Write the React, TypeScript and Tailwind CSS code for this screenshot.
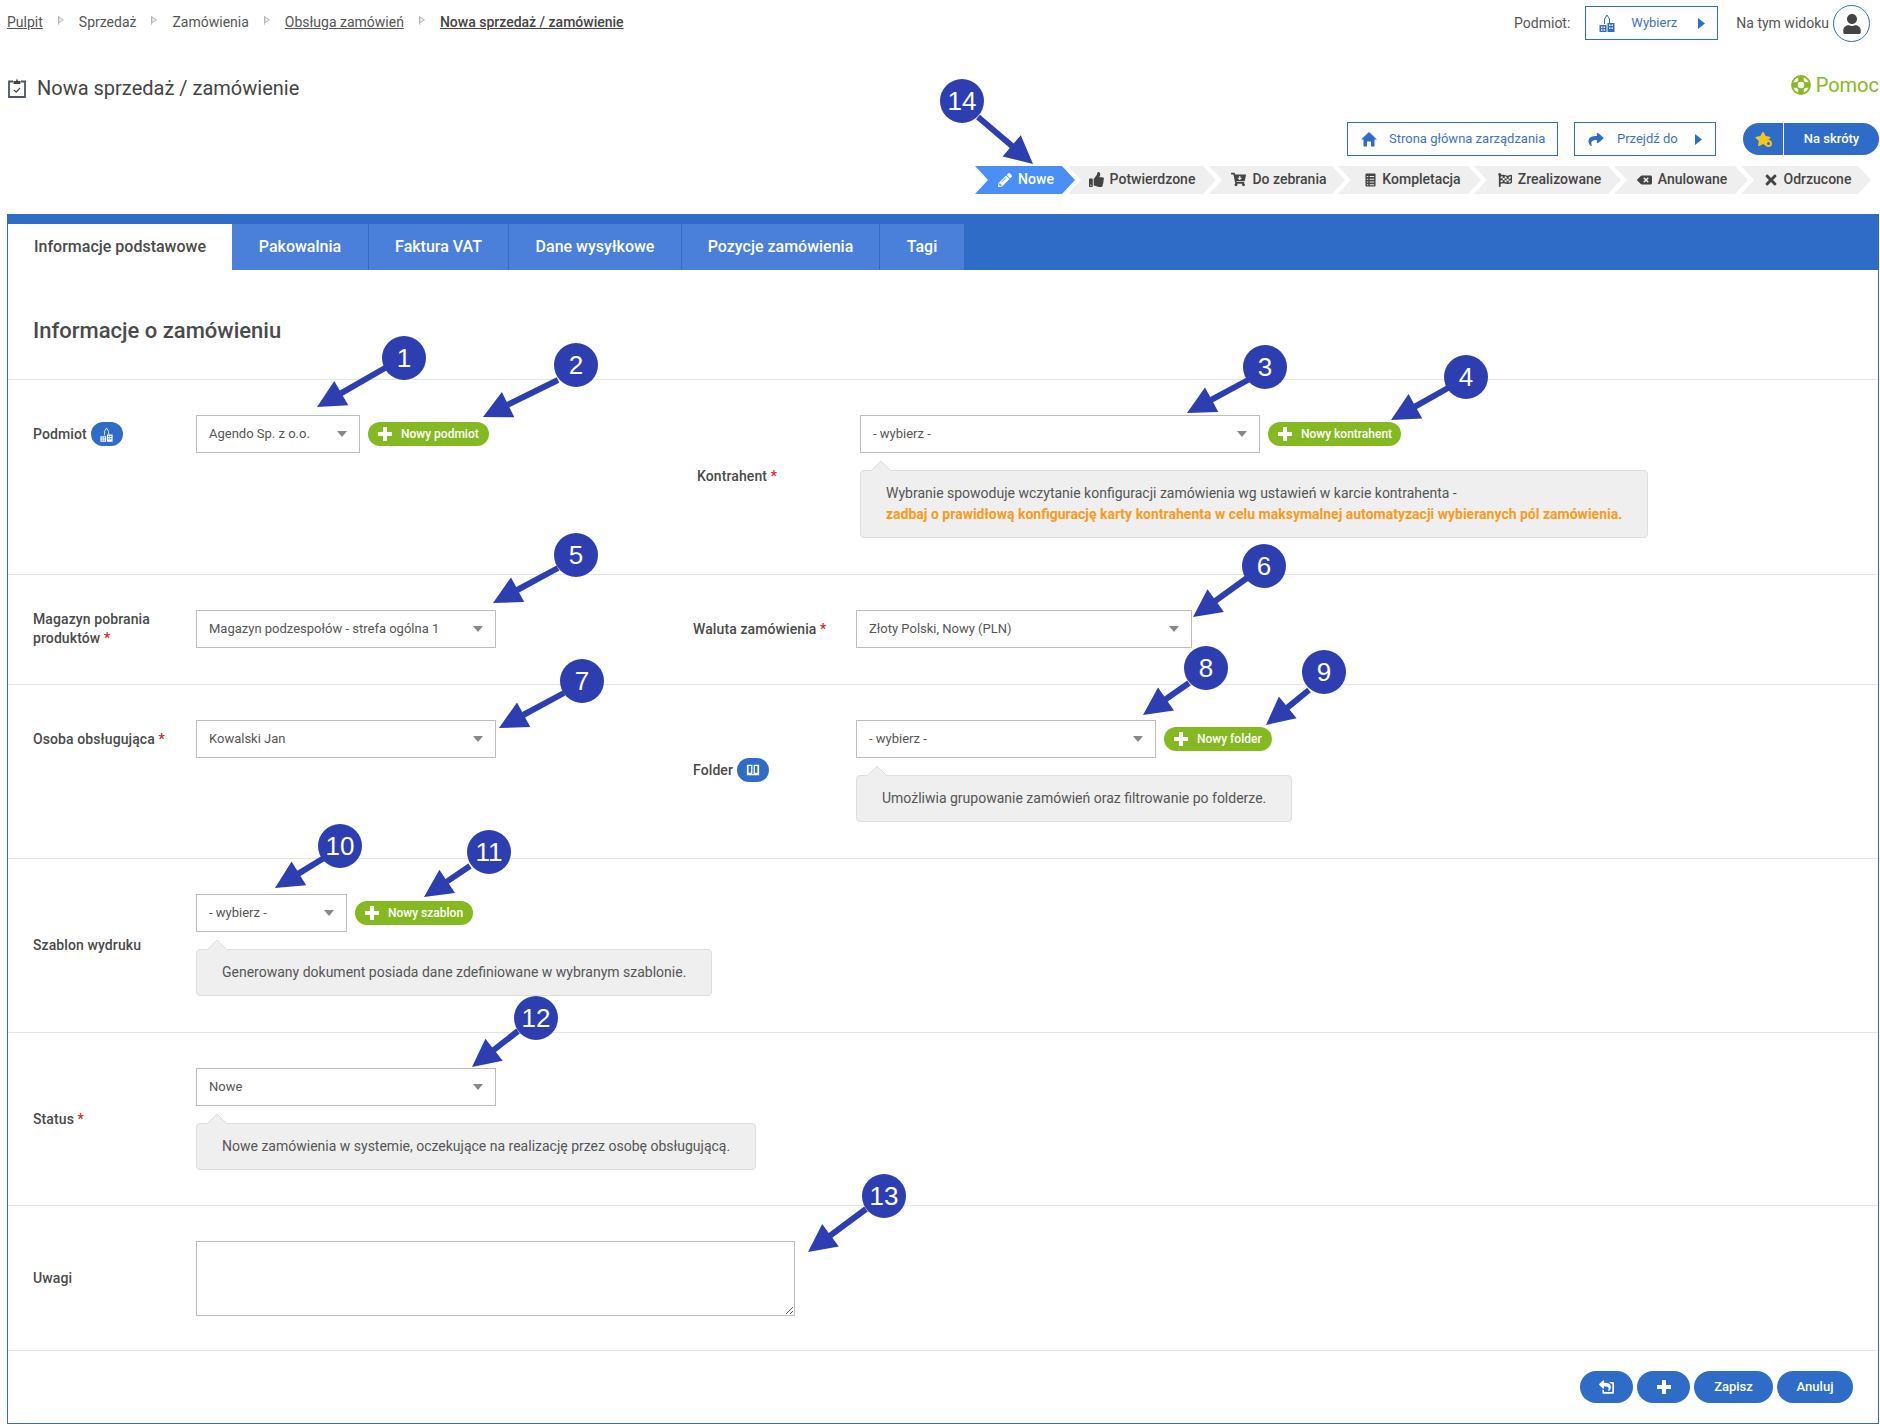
import React from "react";
import {
  FaPencilAlt, FaThumbsUp, FaCartArrowDown, FaFlagCheckered, FaBackspace, FaTimes,
  FaUser, FaShare, FaShareSquare, FaStar,
} from "react-icons/fa";

const Building = ({ className = "", win = "white" }: { className?: string; win?: string }) => (
  <svg viewBox="0 0 16 18" className={className} fill="currentColor">
    <path d="M5.500 10V5L8 1l2.500 4v4" fill="none" stroke="currentColor" strokeWidth="1" />
    <path d="M.5 11h7v7h-7zM8.500 9h7v9h-7z" />
    <path d="M2 12.500h1.500V14H2zM4.500 12.500H6V14H4.500zM2 15.200h1.500v1.500H2zM4.500 15.200H6v1.500H4.500zM10 10.500h1.500V12H10zM12.500 10.500H14V12h-1.500zM10 13.500h1.500V15H10zM12.500 13.500H14V15h-1.500z" fill={win} />
  </svg>
);

const Book = () => (
  <svg viewBox="0 0 16 16" className="w-[14px] h-[14px]" fill="white">
    <path d="M1 2h6.300v10.500H1zM8.700 2H15v10.500H8.700zM1 12.500h14V14H1z" />
    <path d="M3 3.500h2.800v7.500H3zM10.200 3.500H13v7.500h-2.800z" fill="#2f6cc8" />
  </svg>
);

const Clipboard = () => (
  <svg viewBox="0 0 18 20" className="w-[18px] h-[20px]" fill="none">
    <path d="M5 3.500H1v15.500h16V3.500h-4" stroke="#4b5563" strokeWidth="1.800" />
    <path d="M5.500 6V3H8l1-2.500L10 3h2.500v3z" fill="#444" />
    <path d="M6 12l2.200 2.200L12 10" stroke="#444" strokeWidth="1.200" />
  </svg>
);

const ListBook = () => (
  <svg viewBox="0 0 12 15" className="w-[11px] h-[14px]">
    <rect x="0.500" y="0.500" width="11" height="14" rx="1" fill="#444" />
    <path d="M2 3h1.500v1.200H2zM5 3h5v1.200H5zM2 6h1.500v1.200H2zM5 6h5v1.200H5zM2 9h1.500v1.200H2zM5 9h5v1.200H5zM2 12h1.500v1.200H2zM5 12h5v1.200H5z" fill="#efefef" />
  </svg>
);

const Plus = ({ className = "w-[14px] h-[14px]" }: { className?: string }) => (
  <svg viewBox="0 0 14 14" className={className} fill="white">
    <path d="M5 0h4v5h5v4H9v5H5V9H0V5h5z" />
  </svg>
);

const TriRight = () => (
  <svg viewBox="0 0 7 11" className="ml-auto w-[7px] h-[11px] shrink-0">
    <path d="M0 0l7 5.500L0 11z" fill="#2f6cc8" />
  </svg>
);

const HomeIcon = () => (
  <svg viewBox="0 0 16 16" className="w-[16px] h-[16px] shrink-0" fill="#2f6cc8">
    <path d="M8 1l8 7.500h-2.500V15.500H10V10.500H6v5H2.500V8.500H0z" />
  </svg>
);

const Ring = () => (
  <svg viewBox="0 0 20 20" className="w-[20px] h-[20px] shrink-0" fill="none" stroke="#85b922">
    <circle cx="10" cy="10" r="9" strokeWidth="1.800" />
    <circle cx="10" cy="10" r="4.200" strokeWidth="1.800" />
    <path d="M10 1v5M10 14v5M1 10h5M14 10h5" strokeWidth="5.500" />
  </svg>
);

const Sep = () => (
  <svg viewBox="0 0 7 11" className="w-[6px] h-[11px] -mt-[3px] mx-[15px] shrink-0">
    <path d="M.8.500v10M.8 1l5.500 3.700L.8 8.200z" fill="#f0f0f0" stroke="#a8a8a8" strokeWidth="0.900" />
  </svg>
);

const Req = () => <span className="text-[#d9232e]"> *</span>;

const Caret = () => (
  <svg viewBox="0 0 10 6" className="w-[10px] h-[6px] shrink-0">
    <path d="M0 0h10L5 6z" fill="#888" />
  </svg>
);

const Select = ({ w, value }: { w: string; value: string }) => (
  <div className={`${w} h-[38px] shrink-0 flex items-center justify-between border border-[#bdbdbd] bg-white pl-[12px] pr-[12px] text-[13px] text-[#555]`}>
    <span>{value}</span>
    <Caret />
  </div>
);

const AddButton = ({ children, w }: { children: React.ReactNode; w: string }) => (
  <div className={`${w} h-[24px] flex items-center rounded-full bg-[#85b922] pl-[10px] text-white text-[12px] font-medium gap-[9px] ml-2 whitespace-nowrap`}>
    <Plus />
    <span>{children}</span>
  </div>
);

const Note = ({ w, children }: { w: string; children: React.ReactNode }) => (
  <div className={`${w} relative mt-[17px] rounded-sm border border-[#dedede] bg-[#efefef] px-[25px] py-3 text-[14px] leading-[21px] text-[#555] whitespace-nowrap`}>
    <svg viewBox="0 0 20 10" className="absolute left-[10px] -top-[10px] w-[20px] h-[10px]">
      <path d="M0 10L10 0l10 10" fill="#efefef" stroke="#dedede" />
    </svg>
    {children}
  </div>
);

const Label = ({ children, w = "w-[163px]" }: { children: React.ReactNode; w?: string }) => (
  <div className={`${w} shrink-0 flex items-center text-[14px] leading-[19px] font-medium tracking-[0.1px] text-[#4a4a4a]`}>
    {children}
  </div>
);

const Badge = ({ children }: { children: React.ReactNode }) => (
  <span className="ml-1 inline-flex h-[24px] w-[32px] items-center justify-center rounded-full bg-[#2f6cc8] text-white">
    {children}
  </span>
);

const Step = ({ w, icon, label, active }: { w: string; icon: React.ReactNode; label: string; active?: boolean }) => (
  <div
    className={`${w} h-[28px] -ml-[7px] first:ml-0 pb-[1px] flex items-center justify-center gap-[6px] text-[14px] font-medium [clip-path:polygon(0_0,calc(100%-13px)_0,100%_50%,calc(100%-13px)_100%,0_100%,13px_50%)] ${
      active ? "bg-[#4a8ff5] text-white" : "bg-[#efefef] text-[#444]"
    }`}
  >
    {icon}
    <span>{label}</span>
  </div>
);

const Row = ({ children, className = "pb-9" }: { children: React.ReactNode; className?: string }) => (
  <div className={`flex items-start border-t border-[#e5e5e5] pt-[35px] ${className}`}>{children}</div>
);

const LeftCol = ({ children }: { children: React.ReactNode }) => (
  <div className="w-[685px] shrink-0 pl-[25px] flex items-center">{children}</div>
);

const FootBtn = ({ w, children }: { w: string; children: React.ReactNode }) => (
  <div className={`${w} h-[32px] flex items-center justify-center rounded-full bg-[#2f6cc8] text-white text-[13px] font-medium`}>
    {children}
  </div>
);

const callouts: { n: string; cx: number; cy: number; sx: number; sy: number; tx: number; ty: number }[] = [
  { n: "1", cx: 404, cy: 358, sx: 385, sy: 368, tx: 317, ty: 407 },
  { n: "2", cx: 576, cy: 365, sx: 558, sy: 380, tx: 483, ty: 417 },
  { n: "3", cx: 1265, cy: 367, sx: 1248, sy: 380, tx: 1187, ty: 413 },
  { n: "4", cx: 1466, cy: 377, sx: 1448, sy: 388, tx: 1391, ty: 420 },
  { n: "5", cx: 576, cy: 555, sx: 558, sy: 568, tx: 493, ty: 603 },
  { n: "6", cx: 1264, cy: 566, sx: 1247, sy: 578, tx: 1193, ty: 617 },
  { n: "7", cx: 582, cy: 681, sx: 564, sy: 693, tx: 499, ty: 728 },
  { n: "8", cx: 1206, cy: 668, sx: 1189, sy: 683, tx: 1143, ty: 715 },
  { n: "9", cx: 1324, cy: 672, sx: 1309, sy: 690, tx: 1266, ty: 725 },
  { n: "10", cx: 340, cy: 846, sx: 324, sy: 858, tx: 275, ty: 888 },
  { n: "11", cx: 489, cy: 852, sx: 470, sy: 866, tx: 424, ty: 897 },
  { n: "12", cx: 536, cy: 1018, sx: 518, sy: 1031, tx: 472, ty: 1067 },
  { n: "13", cx: 884, cy: 1196, sx: 866, sy: 1209, tx: 808, ty: 1252 },
  { n: "14", cx: 962, cy: 101, sx: 978, sy: 117, tx: 1033, ty: 164 },
];

const arrowPath = (sx: number, sy: number, tx: number, ty: number) => {
  const len = Math.hypot(tx - sx, ty - sy);
  const ux = (tx - sx) / len;
  const uy = (ty - sy) / len;
  const px = -uy;
  const py = ux;
  const bx = tx - ux * 28;
  const by = ty - uy * 28;
  const s = 3;
  const h = 14;
  const pts = [
    [sx + px * s, sy + py * s],
    [bx + px * s, by + py * s],
    [bx + px * h, by + py * h],
    [tx, ty],
    [bx - px * h, by - py * h],
    [bx - px * s, by - py * s],
    [sx - px * s, sy - py * s],
  ];
  return "M" + pts.map((p) => p.map((v) => v.toFixed(1)).join(" ")).join("L") + "Z";
};

const Callouts = () => (
  <>
    <svg className="absolute left-0 top-0 w-[1880px] h-[1426px] pointer-events-none" viewBox="0 0 1880 1426">
      {callouts.map((c) => (
        <path key={c.n} d={arrowPath(c.sx, c.sy, c.tx, c.ty)} fill="#2c3eb0" />
      ))}
    </svg>
    {callouts.map((c) => (
      <div
        key={c.n}
        className="absolute w-[44px] h-[44px] rounded-full bg-[#2c3eb0] text-white flex items-center justify-center text-[26px] font-['Liberation_Sans',sans-serif]"
        style={{ left: c.cx - 22, top: c.cy - 22 }}
      >
        {c.n}
      </div>
    ))}
  </>
);

export default function App() {
  return (
    <div className="relative w-[1880px] h-[1426px] bg-white font-['Roboto',sans-serif] text-[#444] overflow-hidden">
      <div className="flex items-center justify-between pt-[5px] pl-[7px] pr-[10px]">
        <div className="flex items-center text-[14px] text-[#555] -mt-[3px]">
          <span className="underline">Pulpit</span>
          <Sep />
          <span>Sprzedaż</span>
          <Sep />
          <span>Zamówienia</span>
          <Sep />
          <span className="underline">Obsługa zamówień</span>
          <Sep />
          <span className="underline font-medium text-[#444]">Nowa sprzedaż / zamówienie</span>
        </div>
        <div className="flex items-center text-[14px] text-[#555]">
          <span className="-mt-[1px]">Podmiot:</span>
          <div className="ml-[15px] -mt-[1px] w-[133px] h-[34px] flex items-center border border-[#2f6cc8] pl-[13px] pr-[12px] text-[13px] text-[#3e70c9]">
            <Building className="w-[16px] h-[18px] text-[#2f6cc8]" />
            <span className="ml-[16px]">Wybierz</span>
            <TriRight />
          </div>
          <span className="ml-[18px] -mt-[1px]">Na tym widoku</span>
          <div className="ml-[4px] w-[37px] h-[37px] rounded-full border border-[#2f6cc8] flex items-center justify-center">
            <FaUser className="w-[20px] h-[20px] text-[#444]" />
          </div>
        </div>
      </div>

      <div className="flex justify-between h-[172px] pl-[8px] pr-[1px]">
        <div className="mt-[31px] h-[30px] flex items-center gap-[11px] text-[20px] text-[#444]">
          <Clipboard />
          <span>Nowa sprzedaż / zamówienie</span>
        </div>
        <div className="flex flex-col items-end pt-[33px]">
          <div className="h-[20px] flex items-center gap-[5px] text-[20px] text-[#85b922]">
            <Ring />
            <span>Pomoc</span>
          </div>
          <div className="mt-[27px] flex items-center text-[13px] text-[#3e70c9]">
            <div className="w-[211px] h-[34px] flex items-center gap-[12px] border border-[#2f6cc8] pl-[13px]">
              <HomeIcon />
              <span>Strona główna zarządzania</span>
            </div>
            <div className="ml-[16px] w-[142px] h-[34px] flex items-center gap-[13px] border border-[#2f6cc8] pl-[13px] pr-[13px]">
              <FaShare className="w-[16px] h-[15px] text-[#2f6cc8]" />
              <span>Przejdź do</span>
              <TriRight />
            </div>
            <div className="ml-[27px] w-[136px] h-[32px] flex items-center rounded-full bg-[#2f6cc8] text-white font-medium">
              <div className="relative w-[41px] h-full flex items-center justify-center border-r border-white">
                <FaStar className="w-[16px] h-[16px] text-[#f2c61f]" />
                <span className="absolute left-[22px] top-[17px] w-[7px] h-[7px] rounded-full border-2 border-[#f2c61f] bg-[#2f6cc8]" />
              </div>
              <span className="flex-1 text-center">Na skróty</span>
            </div>
          </div>
          <div className="mt-[10px] mr-[8px] flex">
            <Step active w="w-[100px] pl-[2px]" icon={<FaPencilAlt className="w-[14px] h-[14px]" />} label="Nowe" />
            <Step w="w-[148px]" icon={<FaThumbsUp className="w-[15px] h-[15px]" />} label="Potwierdzone" />
            <Step w="w-[136px] pl-[4px]" icon={<FaCartArrowDown className="w-[15px] h-[15px]" />} label="Do zebrania" />
            <Step w="w-[143px] pl-[7px]" icon={<ListBook />} label="Kompletacja" />
            <Step w="w-[147px] pl-[4px]" icon={<FaFlagCheckered className="w-[14px] h-[14px]" />} label="Zrealizowane" />
            <Step w="w-[134px] pl-[2px]" icon={<FaBackspace className="w-[15px] h-[14px]" />} label="Anulowane" />
            <Step w="w-[130px] pl-[3px]" icon={<FaTimes className="w-[14px] h-[16px]" />} label="Odrzucone" />
          </div>
        </div>
      </div>

      <div className="ml-[7px] mr-[1px] border border-[#2f6cc8]">
        <div className="h-[55px] pt-[9px] flex bg-[#2f6cc8] text-[16px] font-medium text-white">
          <div className="w-[224px] flex items-center justify-center bg-white text-[#4a4a4a]">Informacje podstawowe</div>
          <div className="w-[137px] flex items-center justify-center bg-[#4a80d9] border-r border-[#2f6cc8]">Pakowalnia</div>
          <div className="w-[140px] flex items-center justify-center bg-[#4a80d9] border-r border-[#2f6cc8]">Faktura VAT</div>
          <div className="w-[173px] flex items-center justify-center bg-[#4a80d9] border-r border-[#2f6cc8]">Dane wysyłkowe</div>
          <div className="w-[198px] flex items-center justify-center bg-[#4a80d9] border-r border-[#2f6cc8]">Pozycje zamówienia</div>
          <div className="w-[84px] flex items-center justify-center bg-[#4a80d9]">Tagi</div>
        </div>

        <div className="h-[109px] pl-[25px] pt-[46px] text-[22px] leading-[30px] font-medium text-[#4a4a4a]">
          Informacje o zamówieniu
        </div>

        <Row>
          <LeftCol>
            <Label>
              Podmiot
              <Badge><Building className="w-[13px] h-[15px]" win="#2f6cc8" /></Badge>
            </Label>
            <Select w="w-[164px]" value="Agendo Sp. z o.o." />
            <AddButton w="w-[121px]">Nowy podmiot</AddButton>
          </LeftCol>
          <div className="pl-[4px] flex items-center">
            <Label>
              <span>Kontrahent<Req /></span>
            </Label>
            <div className="flex flex-col">
              <div className="flex items-center">
                <Select w="w-[400px]" value="- wybierz -" />
                <AddButton w="w-[133px]">Nowy kontrahent</AddButton>
              </div>
              <Note w="w-[788px]">
                Wybranie spowoduje wczytanie konfiguracji zamówienia wg ustawień w karcie kontrahenta -
                <br />
                <span className="font-bold text-[#fa9b20]">
                  zadbaj o prawidłową konfigurację karty kontrahenta w celu maksymalnej automatyzacji wybieranych pól zamówienia.
                </span>
              </Note>
            </div>
          </div>
        </Row>

        <Row>
          <LeftCol>
            <Label>
              <span>Magazyn pobrania<br />produktów<Req /></span>
            </Label>
            <Select w="w-[300px]" value="Magazyn podzespołów - strefa ogólna 1" />
          </LeftCol>
          <div className="flex items-center">
            <Label w="w-[163px]">
              <span>Waluta zamówienia<Req /></span>
            </Label>
            <Select w="w-[336px]" value="Złoty Polski, Nowy (PLN)" />
          </div>
        </Row>

        <Row>
          <LeftCol>
            <Label>
              <span>Osoba obsługująca<Req /></span>
            </Label>
            <Select w="w-[300px]" value="Kowalski Jan" />
          </LeftCol>
          <div className="flex items-center">
            <Label w="w-[163px] pb-[2px]">
              Folder
              <Badge><Book /></Badge>
            </Label>
            <div className="flex flex-col">
              <div className="flex items-center">
                <Select w="w-[300px]" value="- wybierz -" />
                <AddButton w="w-[108px]">Nowy folder</AddButton>
              </div>
              <Note w="w-[436px]">Umożliwia grupowanie zamówień oraz filtrowanie po folderze.</Note>
            </div>
          </div>
        </Row>

        <Row>
          <LeftCol>
            <Label>Szablon wydruku</Label>
            <div className="flex flex-col">
              <div className="flex items-center">
                <Select w="w-[151px]" value="- wybierz -" />
                <AddButton w="w-[118px]">Nowy szablon</AddButton>
              </div>
              <Note w="w-[516px]">Generowany dokument posiada dane zdefiniowane w wybranym szablonie.</Note>
            </div>
          </LeftCol>
        </Row>

        <Row className="pb-[35px]">
          <div className="pl-[25px] flex items-center">
            <Label>
              <span>Status<Req /></span>
            </Label>
            <div className="flex flex-col">
              <Select w="w-[300px]" value="Nowe" />
              <Note w="w-[560px]">Nowe zamówienia w systemie, oczekujące na realizację przez osobę obsługującą.</Note>
            </div>
          </div>
        </Row>

        <Row className="pb-[34px]">
          <div className="pl-[25px] flex items-center">
            <Label>Uwagi</Label>
            <textarea readOnly className="block w-[599px] h-[75px] border border-[#bdbdbd] bg-white resize" />
          </div>
        </Row>

        <div className="border-t border-[#e5e5e5] pt-[20px] pb-[20px] pr-[25px] flex justify-end gap-[4px]">
          <FootBtn w="w-[53px]"><FaShareSquare className="w-[15px] h-[14px] -scale-x-100" /></FootBtn>
          <FootBtn w="w-[53px]"><Plus className="w-[14px] h-[14px]" /></FootBtn>
          <FootBtn w="w-[79px]">Zapisz</FootBtn>
          <FootBtn w="w-[76px]">Anuluj</FootBtn>
        </div>
      </div>

      <Callouts />
    </div>
  );
}
